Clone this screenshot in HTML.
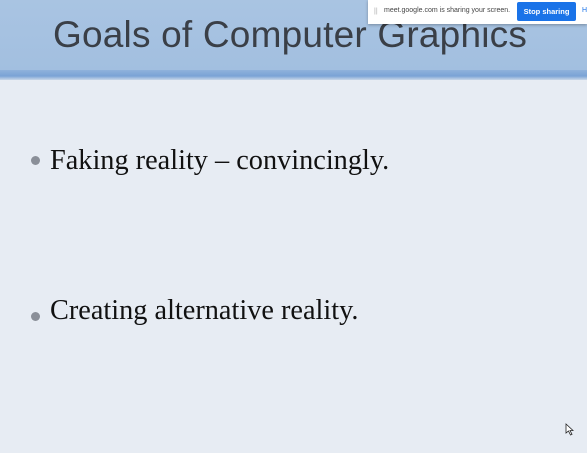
<!DOCTYPE html><html><head><style>
body{margin:0;width:587px;height:453px;overflow:hidden;background:#e7ecf3;position:relative;font-family:"Liberation Sans",sans-serif}
.hd{position:absolute;left:0;top:0;width:587px;height:72px;background:linear-gradient(#a9c4e2,#a2bfe0)}
.st{position:absolute;left:0;top:70px;width:587px;height:10px;background:linear-gradient(#8fb2dc,#7aa3d6 60%,#c9d7e8)}
.t{position:absolute;left:53px;top:14px;font-size:37px;color:#3a3f47;white-space:nowrap;letter-spacing:0.2px}
.b{position:absolute;left:50px;font-family:"Liberation Serif",serif;font-size:28.3px;color:#111;white-space:nowrap}
.d{position:absolute;left:31px;width:9px;height:9px;border-radius:50%;background:#8a8f98}
.pop{position:absolute;left:368px;top:0;width:219px;height:24px;background:#fff;box-shadow:0 1px 3px rgba(0,0,0,.3);font-size:7px;color:#444}
.btn{position:absolute;left:149px;top:2px;width:59px;height:19px;background:#1a73e8;border-radius:2px;color:#fff;font-weight:bold;font-size:7.5px;text-align:center;line-height:19px}
</style></head><body>
<div class="hd"></div><div class="st"></div>
<div class="t">Goals of Computer Graphics</div>
<div class="d" style="top:156px"></div><div class="b" style="top:145px">Faking reality – convincingly.</div>
<div class="d" style="top:312px"></div><div class="b" style="top:295px">Creating alternative reality.</div>
<div class="pop"><span style="position:absolute;left:6px;top:8px;color:#aaa">||</span><span style="position:absolute;left:16px;top:7px">meet.google.com is sharing your screen.</span><div class="btn">Stop sharing</div><span style="position:absolute;left:214px;top:7px;color:#1a73e8">H</span></div>
<svg style="position:absolute;left:565px;top:423px" width="9" height="13" viewBox="0 0 9 13"><path d="M1 1 L1 10 L3.5 8 L5.5 12 L7 11.3 L5 7.5 L8 7.5 Z" fill="#fff" stroke="#222" stroke-width="0.8"/></svg>
</body></html>
